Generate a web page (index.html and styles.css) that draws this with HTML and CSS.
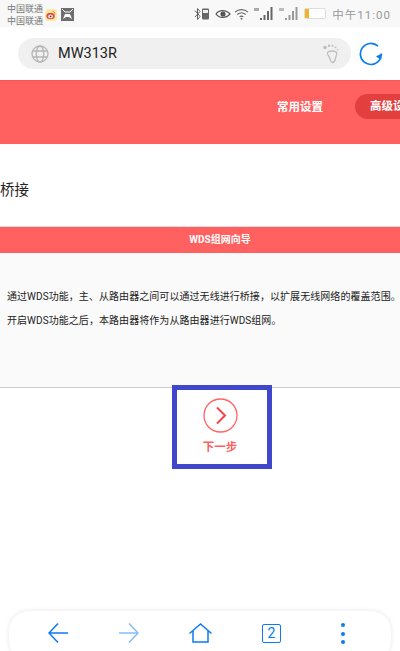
FILE: index.html

```html
<!DOCTYPE html>
<html lang="zh-CN">
<head>
    <meta charset="UTF-8">
    <meta name="viewport" content="width=device-width, initial-scale=1.0">
    <title>WDS组网向导</title>
    <link rel="stylesheet" href="styles.css">
</head>
<body>
    <div class="status-bar">
        <div class="carriers">
            <div>中国联通</div>
            <div>中国联通</div>
        </div>
        <svg class="app-icon" width="12" height="12" viewBox="0 0 13 13">
            <rect width="13" height="13" rx="3" fill="#fde9a8"/>
            <ellipse cx="6" cy="7.500" rx="4.500" ry="3.500" fill="#e2483d"/>
            <ellipse cx="6" cy="8" rx="2.500" ry="2" fill="#fff"/>
            <circle cx="6" cy="8" r="1" fill="#333"/>
            <path d="M8 2.500a3 3 0 0 1 3 3" stroke="#f08a24" fill="none"/>
        </svg>
        <svg class="app-icon" width="13" height="13" viewBox="0 0 13 13">
            <rect width="13" height="13" fill="#6e6e6e"/>
            <path d="M1 1l3 3h5l3-3" stroke="#fff" fill="none"/>
            <path d="M2 11l2-5h5l2 5-3-2H5z" fill="#fff"/>
        </svg>
        <div class="status-right">
            <svg width="18" height="14" viewBox="0 0 18 14">
                <path d="M1 3.500l5 6-2.500 3V1.500L6 4.500 1 10" stroke="#555" fill="none" stroke-width=".9"/>
                <rect x="8" y="1.500" width="7" height="11" rx="1" fill="#666"/>
                <rect x="9" y="3" width="5" height="3" fill="#eee"/>
            </svg>
            <svg width="16" height="12" viewBox="0 0 16 12">
                <path d="M1 6c3-4.500 10-4.500 14 0-4 4.500-11 4.500-14 0z" stroke="#555" stroke-width="1.200" fill="none"/>
                <circle cx="8" cy="6" r="2.600" fill="#555"/>
            </svg>
            <svg width="15" height="12" viewBox="0 0 16 12">
                <path d="M1 4c4-3.500 10-3.500 14 0M3.500 6.500c3-2.500 6-2.500 9 0M6 9c1.500-1 2.500-1 4 0" stroke="#666" stroke-width="1.200" fill="none"/>
                <circle cx="8" cy="11" r="1" fill="#666"/>
            </svg>
            <svg class="signal" width="20" height="13" viewBox="0 0 20 13">
                <path d="M6 13h2v-2H6zM9.500 13h2V8h-2zM13 13h2V4h-2zM16.500 13h2V0h-2z" fill="#666"/>
                <path d="M0 1h5v3H0z" fill="#aaa"/>
            </svg>
            <svg class="signal" width="20" height="13" viewBox="0 0 20 13">
                <path d="M6 13h2v-2H6zM9.500 13h2V8h-2zM13 13h2V4h-2zM16.500 13h2V0h-2z" fill="#999"/>
                <path d="M0 1h5v3H0z" fill="#bbb"/>
            </svg>
            <div class="battery"><span class="battery-level"></span></div>
            <span class="clock">中午11:00</span>
        </div>
    </div>

    <div class="browser-bar">
        <div class="address">
            <svg width="18" height="18" viewBox="0 0 18 18" fill="none" stroke="#b5b5b5" stroke-width="1.300">
                <circle cx="9" cy="9" r="8"/>
                <ellipse cx="9" cy="9" rx="3.700" ry="8"/>
                <path d="M1.800 6h14.400M1.800 12h14.400"/>
            </svg>
            <span class="url">MW313R</span>
            <svg class="foot" width="16" height="20" viewBox="0 0 16 20">
                <circle cx="2" cy="3.500" r="1.800" fill="#bdbdbd"/>
                <circle cx="6" cy="1.800" r="1.200" fill="#bdbdbd"/>
                <circle cx="9.500" cy="1.800" r="1" fill="#bdbdbd"/>
                <circle cx="12.500" cy="3.300" r=".9" fill="#bdbdbd"/>
                <circle cx="14.500" cy="5.800" r=".8" fill="#bdbdbd"/>
                <path d="M4.500 8.500C6 6.500 12 6.500 13.500 8.500c.8 1.500-.3 3-.8 5-.5 2.500-1.200 5-3.200 5-2 0-2-2-2.500-3.500C7 13 3.500 10.500 4.500 8.500z" fill="none" stroke="#bdbdbd" stroke-width="1.300"/>
            </svg>
        </div>
        <svg class="reload" width="24" height="24" viewBox="0 0 24 24" fill="none" stroke="#0a7cf0" stroke-width="1.700">
            <path d="M21.600 16A10.500 10.500 0 1 1 19 4.200"/>
            <path d="M22.500 11.500l-.9 5-4-2.300" stroke-width="1.500" fill="#0a7cf0"/>
        </svg>
    </div>

    <div class="top-nav">
        <span class="nav-item">常用设置</span>
        <span class="nav-item nav-active">高级设置</span>
    </div>

    <h1 class="page-title">桥接</h1>

    <div class="wizard-head">WDS组网向导</div>
    <div class="wizard-body">
        <p>通过WDS功能，主、从路由器之间可以通过无线进行桥接，以扩展无线网络的覆盖范围。</p>
        <p>开启WDS功能之后，本路由器将作为从路由器进行WDS组网。</p>
    </div>

    <div class="next-wrap">
        <div class="next-step">
            <svg width="35" height="35" viewBox="0 0 35 35" fill="none" stroke="#ff6363">
                <circle cx="17.500" cy="17.500" r="16.500" stroke-width="1.300"/>
                <path d="M14 9.500l8 8-8 8" stroke-width="2" stroke="#f4434a"/>
            </svg>
            <span class="next-label">下一步</span>
        </div>
        <div class="mark-box"></div>
    </div>

    <div class="bottom-bar">
        <svg class="back" width="20" height="20" viewBox="0 0 20 20" fill="none" stroke="#0a7cf0" stroke-width="1.500">
            <path d="M20 10H1M10 .5L1 10l9 9.500"/>
        </svg>
        <svg class="forward" width="20" height="20" viewBox="0 0 20 20" fill="none" stroke="#85bdf7" stroke-width="1.500">
            <path d="M0 10h19M10 .5l9 9.500-9 9.500"/>
        </svg>
        <svg class="home" width="23" height="20" viewBox="0 0 23 20" fill="none" stroke="#0a7cf0" stroke-width="1.500">
            <path d="M.5 10.500L11.500 1l11 9.500M4 8v11h15V8"/>
        </svg>
        <div class="tab-count">2</div>
        <div class="more">
            <span></span>
            <span></span>
            <span></span>
        </div>
    </div>
</body>
</html>
```

FILE: styles.css

```css
html, body {
    margin: 0;
    padding: 0;
}
body {
    position: relative;
    width: 400px;
    height: 651px;
    overflow: hidden;
    background-color: #fff;
    font-family: Roboto, "Noto Sans CJK SC", sans-serif;
    color: #222;
}
.status-bar {
    display: flex;
    align-items: center;
    height: 27px;
    padding-left: 7px;
    box-sizing: border-box;
    background-color: #f8f8f8;
}
.carriers {
    width: 38px;
    padding-top: 2px;
    font-size: 9px;
    line-height: 12px;
    color: #777;
    white-space: nowrap;
}
.app-icon {
    margin-top: 2px;
}
.app-icon + .app-icon {
    margin-left: 4px;
}
.status-right {
    display: flex;
    align-items: center;
    gap: 3px;
    margin-left: auto;
    padding-right: 9px;
}
.signal {
    margin-left: 2px;
}
.battery {
    width: 20px;
    height: 9px;
    margin-left: 2px;
    border: 1px solid #ddd;
    border-radius: 2px;
    background-color: #fff;
}
.battery-level {
    display: block;
    width: 4px;
    height: 9px;
    background-color: #f0b429;
}
.clock {
    margin-left: 3px;
    font-size: 11.500px;
    letter-spacing: 1px;
    color: #999;
    white-space: nowrap;
}
.browser-bar {
    display: flex;
    align-items: center;
    height: 53px;
    padding: 0 16px 0 18px;
    box-sizing: border-box;
}
.address {
    display: flex;
    align-items: center;
    width: 333px;
    height: 31px;
    padding: 0 12px 0 13px;
    box-sizing: border-box;
    border-radius: 16px;
    background-color: #f0f0f0;
}
.url {
    margin-left: 9px;
    font-size: 14.500px;
    color: #222;
}
.foot {
    margin-left: auto;
}
.reload {
    margin-left: 8px;
}
.top-nav {
    display: flex;
    align-items: center;
    gap: 32px;
    height: 64px;
    padding: 0 0 13px 277px;
    box-sizing: border-box;
    overflow: hidden;
    border-top: 1px solid #ff5252;
    background-color: #ff6060;
    color: #fff;
    font-size: 11.500px;
    font-weight: 700;
}
.nav-item {
    flex-shrink: 0;
    white-space: nowrap;
}
.nav-active {
    padding: 0 15px;
    line-height: 25px;
    border-radius: 13px;
    background-color: #e43f3f;
}
.page-title {
    margin: 0;
    height: 82px;
    line-height: 94px;
    box-sizing: border-box;
    font-size: 14.500px;
    font-weight: 400;
    color: #222;
}
.wizard-head {
    height: 27px;
    padding-left: 40px;
    line-height: 26px;
    box-sizing: border-box;
    border-top: 1px solid #ddd;
    background-color: #ff6060;
    color: #fff;
    font-size: 10px;
    font-weight: 700;
    text-align: center;
}
.wizard-body {
    height: 135px;
    padding: 37px 0 0 7px;
    box-sizing: border-box;
    border-bottom: 1px solid #ccc;
    background-color: #fafafa;
    font-size: 10px;
    letter-spacing: .06px;
    color: #222;
    white-space: nowrap;
}
.wizard-body p {
    margin: 0 0 10px;
    line-height: 14px;
}
.next-wrap {
    position: relative;
    display: flex;
    justify-content: center;
    padding-left: 40px;
}
.next-step {
    display: flex;
    flex-direction: column;
    align-items: center;
    padding-top: 10px;
}
.next-label {
    margin-top: 5px;
    font-size: 11.500px;
    font-weight: 700;
    color: #ff5f5f;
}
.mark-box {
    position: absolute;
    left: 172px;
    top: -3px;
    width: 100px;
    height: 84px;
    box-sizing: border-box;
    border: 5px solid #4147cc;
}
.bottom-bar {
    position: absolute;
    left: 9px;
    top: 611px;
    width: 382px;
    height: 50px;
    display: flex;
    align-items: flex-start;
    padding: 12px 0 0 39px;
    box-sizing: border-box;
    border-radius: 20px;
    background-color: #fff;
    box-shadow: 0 0 5px rgba(0, 0, 0, 0.1);
}
.forward {
    margin-left: 51px;
}
.home {
    margin-left: 50px;
}
.tab-count {
    width: 19px;
    height: 19px;
    margin: 1px 0 0 50px;
    box-sizing: border-box;
    border: 1.500px solid #0a7cf0;
    border-radius: 2px;
    color: #0a7cf0;
    font-size: 14px;
    line-height: 16px;
    text-align: center;
}
.more {
    display: flex;
    flex-direction: column;
    gap: 4.500px;
    margin: 0 0 0 60px;
}
.more span {
    width: 4px;
    height: 4px;
    border-radius: 50%;
    background-color: #0a7cf0;
}
```
